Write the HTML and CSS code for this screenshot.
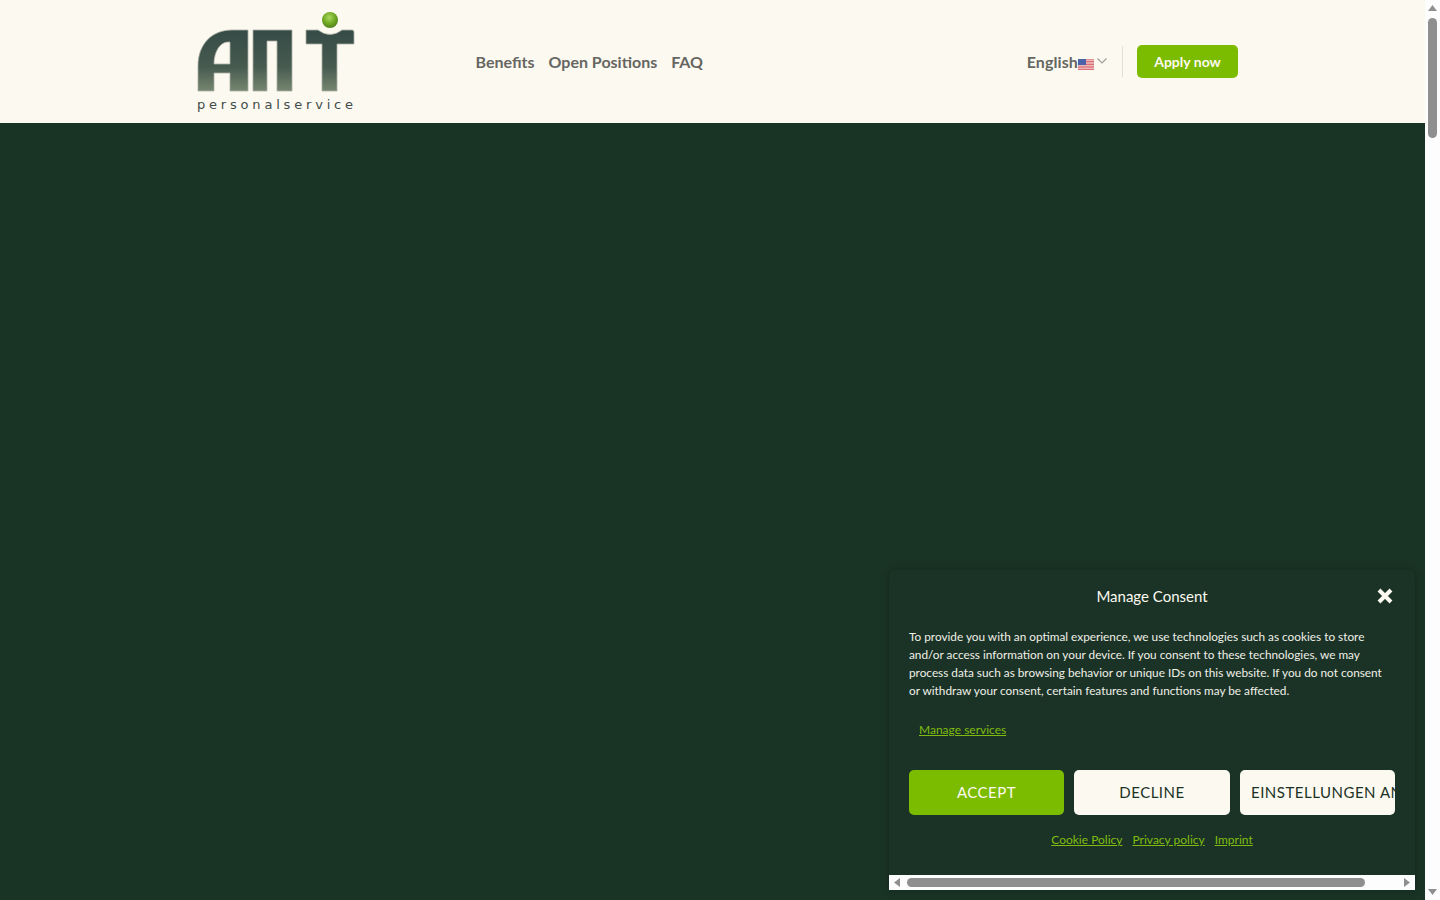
FILE: index.html
```html
<!DOCTYPE html>
<html lang="en">
<head>
  <meta charset="UTF-8">
  <title>ANT Personalservice</title>
  <link rel="stylesheet" href="styles.css">
</head>
<body>
  <div class="page">
    <div class="site">
      <header class="site-header">
        <a class="logo" href="#">
          <svg width="160" height="102" viewBox="0 0 160 102">
            <defs>
              <linearGradient id="metal" gradientUnits="userSpaceOnUse" x1="0" y1="19" x2="0" y2="80">
                <stop offset="0" stop-color="#364b46" />
                <stop offset="0.6" stop-color="#465a50" />
                <stop offset="1" stop-color="#76866f" />
              </linearGradient>
              <radialGradient id="ball" cx="0.45" cy="0.35" r="0.7">
                <stop offset="0" stop-color="#a9d860" />
                <stop offset="0.55" stop-color="#6fa821" />
                <stop offset="1" stop-color="#4c7a1c" />
              </radialGradient>
            </defs>
            <!-- logo mark -->
            <path class="logo-mark" fill-rule="evenodd" d="M2 80V55C2 33 16 19 36 19H52V80H34V62H18V80ZM18 53H34V31H32C24 31 18 41 18 53Z" />
            <path class="logo-mark" d="M57 80V19H96V80H81V30H71V80Z" />
            <path class="logo-mark" d="M110 19H122Q134 28 146 19H156Q158 19 158 21V33H141V80H126V33H110Z" />
            <circle cx="134" cy="9" r="8" fill="url(#ball)" />
            <text class="logo-text" x="1" y="98" textLength="156">personalservice</text>
          </svg>
        </a>
        <nav class="main-nav">
          <a href="#">Benefits</a>
          <a href="#">Open Positions</a>
          <a href="#">FAQ</a>
        </nav>
        <div class="header-right">
          <a class="lang" href="#">
            English
            <svg class="flag" width="16" height="11" viewBox="0 0 16 11">
              <rect width="16" height="11" fill="#f4f0ee" />
              <path d="M0 .8H16M0 2.4H16M0 4H16M0 5.6H16M0 7.2H16M0 8.8H16M0 10.4H16" stroke="#d8505a" stroke-width=".9" />
              <rect width="8" height="6" fill="#4a62a8" />
            </svg>
            <svg class="chevron" width="10" height="6" viewBox="0 0 10 6">
              <path d="M.5.5L5 5L9.5.5" fill="none" stroke="#a0a09a" stroke-width="1.2" />
            </svg>
          </a>
          <span class="divider"></span>
          <a class="apply-btn" href="#">Apply now</a>
        </div>
      </header>
      <main class="hero"></main>

      <!-- cookie banner sits over the page -->
      <aside class="consent">
        <div class="consent-body">
          <div class="consent-head">
            <span></span>
            <h2>Manage Consent</h2>
            <svg class="close" width="16" height="16" viewBox="0 0 16 16">
              <path d="M2 2L14 14M14 2L2 14" stroke="#fcf9f0" stroke-width="4" />
            </svg>
          </div>
          <p class="consent-text">To provide you with an optimal experience, we use technologies such as cookies to store and/or access information on your device. If you consent to these technologies, we may process data such as browsing behavior or unique IDs on this website. If you do not consent or withdraw your consent, certain features and functions may be affected.</p>
          <a class="manage-link" href="#">Manage services</a>
          <div class="consent-buttons">
            <button class="btn btn-accept">ACCEPT</button>
            <button class="btn btn-light">DECLINE</button>
            <button class="btn btn-light btn-clipped">EINSTELLUNGEN ANSEHEN</button>
          </div>
          <div class="consent-links">
            <a href="#">Cookie Policy</a>
            <a href="#">Privacy policy</a>
            <a href="#">Imprint</a>
          </div>
        </div>
        <div class="hscroll">
          <svg width="6" height="9" viewBox="0 0 6 9"><path d="M6 0V9L0 4.5Z" fill="#8f8f8f" /></svg>
          <span class="hscroll-thumb"></span>
          <svg width="6" height="9" viewBox="0 0 6 9"><path d="M0 0V9L6 4.5Z" fill="#8f8f8f" /></svg>
        </div>
      </aside>
    </div>

    <div class="vscroll">
      <svg width="9" height="6" viewBox="0 0 9 6"><path d="M0 6H9L4.5 0Z" fill="#8f8f8f" /></svg>
      <span class="vscroll-thumb"></span>
      <svg width="9" height="6" viewBox="0 0 9 6"><path d="M0 0H9L4.5 6Z" fill="#8f8f8f" /></svg>
    </div>
  </div>
</body>
</html>
```

FILE: styles.css
```css
* {
  margin: 0;
  padding: 0;
  box-sizing: border-box;
}

body {
  font-family: Lato, "Open Sans", sans-serif;
  height: 100vh;
  overflow: hidden;
  background-color: #193325;
}

a {
  text-decoration: none;
}

.page {
  display: flex;
  height: 900px;
}

.site {
  position: relative;
  flex: 1;
  display: flex;
  flex-direction: column;
}

/* header */
.site-header {
  height: 123px;
  display: flex;
  align-items: center;
  padding: 0 187px 0 196px;
  background-color: #fcf9f0;
}

.logo {
  display: flex;
  width: 279.5px;
}

.logo-mark {
  fill: url(#metal);
  stroke: #a9aea3;
  stroke-width: 0.8;
}

.logo-text {
  font-family: "DejaVu Sans", sans-serif;
  font-size: 13px;
  fill: #414c4a;
}

.main-nav {
  display: flex;
  gap: 14px;
}

.main-nav a,
.lang {
  font-size: 16px;
  font-weight: 700;
  color: #666662;
}

.header-right {
  margin-left: auto;
  display: flex;
  align-items: center;
}

.lang {
  display: flex;
  align-items: center;
  letter-spacing: 0.1px;
}

.flag {
  margin-top: 5px;
}

.chevron {
  margin-left: 3px;
  margin-top: -2px;
}

.divider {
  width: 1px;
  height: 31px;
  margin: 0 14px 0 15px;
  background-color: #e3e0d6;
}

.apply-btn {
  width: 101px;
  height: 33px;
  display: flex;
  align-items: center;
  justify-content: center;
  padding-bottom: 1px;
  border-radius: 5px;
  background-color: #7cbc00;
  color: #fcf9f0;
  font-size: 14px;
  font-weight: 700;
}

.hero {
  flex: 1;
  background-color: #193325;
}

/* consent banner */
.consent {
  position: absolute;
  right: 10px;
  bottom: 10px;
  width: 526px;
  height: 320px;
  display: flex;
  flex-direction: column;
  background-color: #1a3326;
  box-shadow: 0 0 10px rgba(0, 0, 0, 0.2);
  border-radius: 5px 5px 0 0;
}

.consent-body {
  flex: 1;
  padding: 16px 20px 0;
  color: #f0efe6;
}

.consent-head {
  display: grid;
  grid-template-columns: 1fr auto 1fr;
  align-items: center;
  height: 20px;
}

.consent-head h2 {
  font-size: 15px;
  font-weight: 400;
  line-height: 20px;
  color: #fcf9f0;
}

.close {
  justify-self: end;
  margin-right: 2px;
}

.consent-text {
  margin-top: 22px;
  font-size: 11.8px;
  line-height: 18px;
}

.manage-link {
  display: block;
  margin: 21px 0 0 10px;
  font-size: 12px;
  line-height: 18px;
  color: #80bc10;
  text-decoration: underline;
}

.consent-buttons {
  display: grid;
  grid-template-columns: 155px 156px 155px;
  gap: 10px;
  margin-top: 31px;
}

.btn {
  height: 45px;
  border: none;
  border-radius: 5px;
  padding-bottom: 2px;
  font-family: Lato, sans-serif;
  font-size: 15px;
  letter-spacing: 0.5px;
  white-space: nowrap;
  overflow: hidden;
}

.btn-accept {
  background-color: #7cbc00;
  color: #fcf9f0;
}

.btn-light {
  background-color: #fcf9f0;
  color: #1a3326;
}

.btn-clipped {
  padding-left: 11px;
  text-align: left;
}

.consent-links {
  display: flex;
  justify-content: center;
  gap: 10px;
  margin-top: 16px;
  font-size: 12px;
  line-height: 18px;
}

.consent-links a {
  color: #80bc10;
  text-decoration: underline;
}

/* scrollbars */
.hscroll {
  height: 15px;
  display: flex;
  align-items: center;
  gap: 7px;
  padding: 0 5px;
  background-color: #fdfdfd;
}

.hscroll-thumb {
  width: 458px;
  height: 9px;
  border-radius: 5px;
  background-color: #8f8f8f;
}

.hscroll svg:last-child {
  margin-left: auto;
}

.vscroll {
  width: 15px;
  display: flex;
  flex-direction: column;
  align-items: center;
  padding: 5px 0;
  background-color: #fdfdfd;
}

.vscroll-thumb {
  width: 9px;
  height: 120px;
  margin-top: 7px;
  border-radius: 5px;
  background-color: #8f8f8f;
}

.vscroll svg:last-child {
  margin-top: auto;
}
```
